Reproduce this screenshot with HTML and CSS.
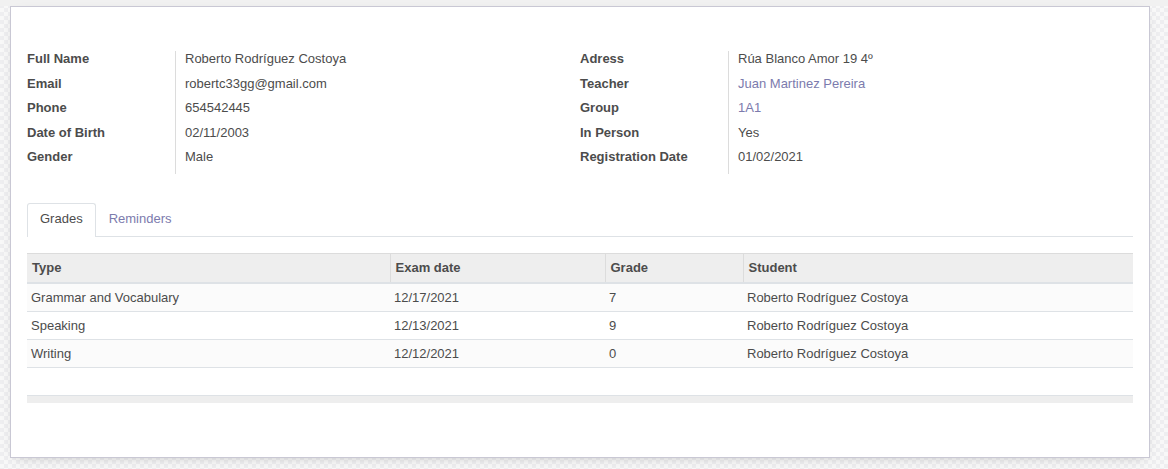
FILE: index.html
```html
<!DOCTYPE html>
<html lang="en">
<head>
<meta charset="utf-8">
<title>Student</title>
<link rel="stylesheet" href="styles.css">
</head>
<body>
<div class="topbar"></div>
<div class="sheet">
  <div class="groups">
    <div class="group">
      <div class="lbl">Full Name</div><div class="val">Roberto Rodríguez Costoya</div>
      <div class="lbl">Email</div><div class="val">robertc33gg@gmail.com</div>
      <div class="lbl">Phone</div><div class="val">654542445</div>
      <div class="lbl">Date of Birth</div><div class="val">02/11/2003</div>
      <div class="lbl">Gender</div><div class="val">Male</div>
    </div>
    <div class="group">
      <div class="lbl">Adress</div><div class="val">Rúa Blanco Amor 19 4º</div>
      <div class="lbl">Teacher</div><div class="val link">Juan Martinez Pereira</div>
      <div class="lbl">Group</div><div class="val link">1A1</div>
      <div class="lbl">In Person</div><div class="val">Yes</div>
      <div class="lbl">Registration Date</div><div class="val">01/02/2021</div>
    </div>
  </div>

  <div class="tabs">
    <div class="tab active">Grades</div>
    <div class="tab">Reminders</div>
  </div>

  <table class="grid">
    <thead>
      <tr>
        <th class="c1">Type</th>
        <th class="c2">Exam date</th>
        <th class="c3">Grade</th>
        <th class="c4">Student</th>
      </tr>
    </thead>
    <tbody>
      <tr class="odd"><td>Grammar and Vocabulary</td><td>12/17/2021</td><td>7</td><td>Roberto Rodríguez Costoya</td></tr>
      <tr><td>Speaking</td><td>12/13/2021</td><td>9</td><td>Roberto Rodríguez Costoya</td></tr>
      <tr class="odd"><td>Writing</td><td>12/12/2021</td><td>0</td><td>Roberto Rodríguez Costoya</td></tr>
      <tr class="empty"><td colspan="4"></td></tr>
    </tbody>
    <tfoot>
      <tr><td colspan="4"></td></tr>
    </tfoot>
  </table>
</div>
</body>
</html>
```

FILE: styles.css
```css
html, body {
  margin: 0;
  padding: 0;
}
body {
  width: 1168px;
  height: 469px;
  overflow: hidden;
  font-family: "Liberation Sans", Arial, sans-serif;
  font-size: 13px;
  color: #4c4c4c;
  background-color: #f6f6f6;
  background-image: repeating-conic-gradient(#eeeef0 0 25%, #f8f8f8 0 50%);
  background-size: 8px 8px;
}
.topbar {
  height: 6px;
  background: #f1f1f1;
}
.sheet {
  box-sizing: border-box;
  width: 1140px;
  height: 452px;
  margin-left: 10px;
  background: #fff;
  border: 1px solid #c9c8d4;
  box-shadow: 0 4px 12px -6px rgba(0, 0, 0, 0.25);
  padding: 44px 16px 0 16px;
}
.groups {
  display: grid;
  grid-template-columns: 553px 553px;
}
.group {
  display: grid;
  grid-template-columns: 149px 1fr;
  grid-auto-rows: 24.5px;
  align-items: stretch;
}
.lbl {
  font-weight: bold;
  line-height: 16px;
  border-right: 1px solid #dcdcdc;
  color: #4c4c4c;
}
.val {
  padding-left: 9px;
  line-height: 16px;
}
.link {
  color: #7c7bad;
}
.tabs {
  margin-top: 29px;
  display: flex;
  border-bottom: 1px solid #dee2e6;
  height: 33px;
}
.tab {
  padding: 0 12px;
  line-height: 29px;
  color: #7c7bad;
  border: 1px solid transparent;
  border-bottom: none;
  border-radius: 3px 3px 0 0;
}
.tab.active {
  color: #4c4c4c;
  border-color: #dee2e6;
  background: #fff;
  height: 34px;
  box-sizing: border-box;
  margin-bottom: -1px;
}
.grid {
  margin-top: 16px;
  width: 1106px;
  border-collapse: collapse;
  table-layout: fixed;
}
.grid th {
  background: #eeeeee;
  border-top: 1px solid #dcdcdc;
  border-bottom: 2px solid #dee2e6;
  border-left: 1px solid #dcdcdc;
  text-align: left;
  font-weight: bold;
  height: 30px;
  padding: 0 5px;
  box-sizing: border-box;
}
.grid th.c1 { width: 363px; border-left: none; }
.grid th.c2 { width: 215px; }
.grid th.c3 { width: 138px; }
.grid th.c4 { width: 390px; }
.grid td {
  height: 27px;
  padding: 0 4px;
  border-bottom: 1px solid #dee2e6;
}
.grid tbody tr.odd td {
  background: #fbfbfb;
}
.grid tbody tr.empty td {
  height: 27px;
  border-bottom: 1px solid #dee2e6;
}
.grid tfoot td {
  height: 7px;
  padding: 0;
  background: #eeeeee;
  border: none;
}
```
